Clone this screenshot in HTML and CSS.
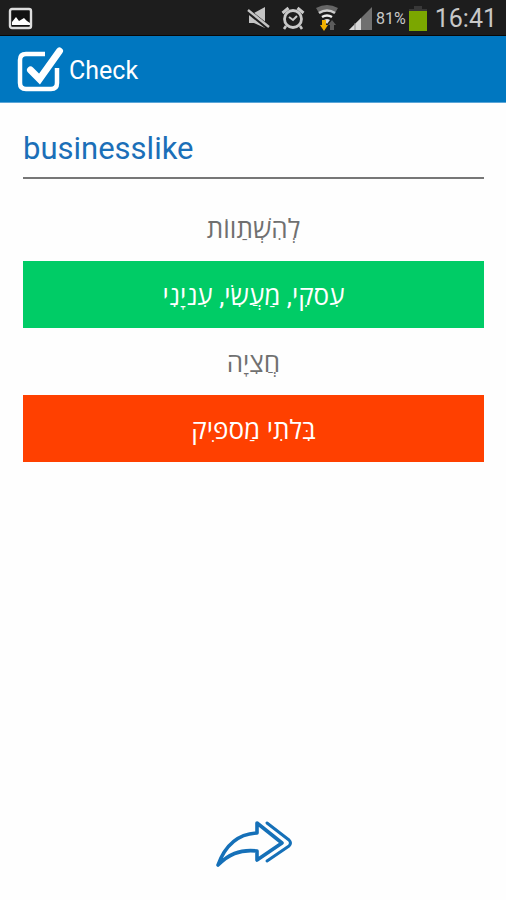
FILE: index.html
```html
<!DOCTYPE html>
<html lang="en">
<head>
<meta charset="utf-8">
<meta name="viewport" content="width=device-width, initial-scale=1">
<title>Check</title>
<link rel="stylesheet" href="styles.css">
</head>
<body>
<div class="status">
  <svg class="photo" width="26" height="24" viewBox="0 0 26 24" aria-hidden="true">
    <rect x="2" y="3" width="21" height="19" rx="2" fill="#111" stroke="#ddd" stroke-width="2.4"/>
    <path d="M4 19v-3l4-5 3 4 5-3 3 3 3 2v2z" fill="#fff"/>
  </svg>
  <div class="indicators">
    <svg width="24" height="24" viewBox="0 0 24 24" aria-hidden="true">
      <path d="M2 7h5l11-6v21L7 17H2z" fill="#c4c4c4"/>
      <path d="M1 5l21 17" stroke="#1d1d1d" stroke-width="5"/>
      <path d="M1 4l21 17" stroke="#c4c4c4" stroke-width="2.4"/>
    </svg>
    <svg width="24" height="24" viewBox="0 0 24 24" fill="none" stroke="#c8c8c8" aria-hidden="true">
      <circle cx="12" cy="13" r="8.5" stroke-width="2.8"/>
      <path d="M1.500 7l6-5M22.500 7l-6-5" stroke-width="3"/>
      <path d="M5 20l-2 3M19 20l2 3" stroke-width="2.600"/>
      <path d="M8 11l4 3 4-4" stroke-width="2"/>
    </svg>
    <svg width="24" height="26" viewBox="0 0 24 26" fill="none" aria-hidden="true">
      <path d="M1 3q11-6 22 0l-3 5q-8-5-16 0z" fill="#666"/>
      <path d="M4 8q8-5 16 0" stroke="#ccc" stroke-width="2.600"/>
      <path d="M7 12q5-3 10 0" stroke="#eee" stroke-width="2.600"/>
      <path d="M9 15q3-2 6 0l-3 4z" fill="#ddd"/>
      <path d="M7 15h4v5h2l-4 6-4-6h2z" fill="#f0b000"/>
      <path d="M15 25v-5h-2l4-5 4 5h-2v5z" fill="#5c5c5c"/>
    </svg>
    <svg width="24" height="26" viewBox="0 0 24 26" aria-hidden="true">
      <path d="M0 25L23 2v23z" fill="#707070"/>
      <path d="M0 25L12 13v12z" fill="#d8d8d8"/>
      <path d="M6 18v7" stroke="#888"/>
    </svg>
    <span class="percent">81%</span>
    <svg class="battery" width="18" height="26" viewBox="0 0 18 26" aria-hidden="true">
      <path d="M5 1h8v3h5v3H0V4h5z" fill="#383838"/>
      <path d="M0 6h18v20H0z" fill="#7ba700"/>
    </svg>
    <span class="time">16:41</span>
  </div>
</div>
<header class="bar">
  <svg width="48" height="48" viewBox="0 0 48 48" fill="none" stroke="#fff" aria-hidden="true">
    <path d="M29 8H10q-6 0-6 6v23q0 6 6 6h25q6 0 6-6V22" stroke-width="4.500"/>
    <path d="M14.500 24l9 9L43.500 5" stroke-width="7" stroke-linecap="round"/>
  </svg>
  <h1>Check</h1>
</header>
<main>
  <h2>businesslike</h2>
  <div class="options" lang="he" dir="rtl">
    <button type="button">לְהִשְׁתַווֹת</button>
    <button type="button" class="right">עִסקִי, מַעֲשִׂי, עִניָנִי</button>
    <button type="button">חֲצִיָה</button>
    <button type="button" class="wrong">בִּלתִי מַספִּיק</button>
  </div>
</main>
<footer>
  <button type="button" class="next" aria-label="Next">
    <svg width="78" height="48" viewBox="0 0 78 48" fill="none" stroke="#1570b8" stroke-linejoin="round" stroke-linecap="round" aria-hidden="true">
      <path d="M4 45C11 26 23 14 43 13V3L68 23 43 40V31C25 29 14 35 4 45z" stroke-width="3.600"/>
      <path d="M53 3L75 20q3 3 0 6L53 41" stroke-width="3"/>
    </svg>
  </button>
</footer>
</body>
</html>
```
FILE: styles.css
```css
* { box-sizing: border-box; }

body {
  margin: 0;
  min-height: 100vh;
  display: flex;
  flex-direction: column;
  background: #fefefe;
  font-family: Roboto, "Open Sans", sans-serif;
}

svg { display: block; flex: none; }

.status {
  height: 36px;
  padding: 1px 9px 0 8px;
  display: flex;
  align-items: center;
  justify-content: space-between;
  background: #1d1d1d;
  border-bottom: 1px solid #080808;
  color: #c8c8c8;
}

.indicators { display: flex; align-items: center; gap: 10px; }
.percent { margin-left: -7px; font-size: 16px; }
.battery { margin-left: -7px; }
.time { margin-left: -2px; font-size: 25px; }

.bar {
  height: 67px;
  padding: 2px 16px 0;
  display: flex;
  align-items: center;
  gap: 5px;
  background: #0077c0;
  border-bottom: 1px solid #5ba6d8;
  color: #fff;
}

h1, h2 { margin: 0; font-weight: 400; }
h1 { padding-top: 2px; font-size: 25px; line-height: 32px; }

main { flex: 1; padding: 27px 22px 0 23px; }

h2 {
  padding-bottom: 9px;
  border-bottom: 2px solid #777;
  color: #1b6fb8;
  font-size: 31px;
  line-height: 38px;
}

.options { margin-top: 15px; display: flex; flex-direction: column; }

button {
  border: 0;
  background: none;
  cursor: pointer;
}

.options button {
  height: 67px;
  padding: 0;
  color: #707070;
  font-family: Roboto, "Open Sans", "DejaVu Sans", sans-serif;
  font-size: 26px;
}

.options .right { background: #00cc66; color: #fff; }
.options .wrong { background: #ff4000; color: #fff; }

footer { display: flex; justify-content: center; padding-bottom: 32px; }
.next { padding: 0; }
```
